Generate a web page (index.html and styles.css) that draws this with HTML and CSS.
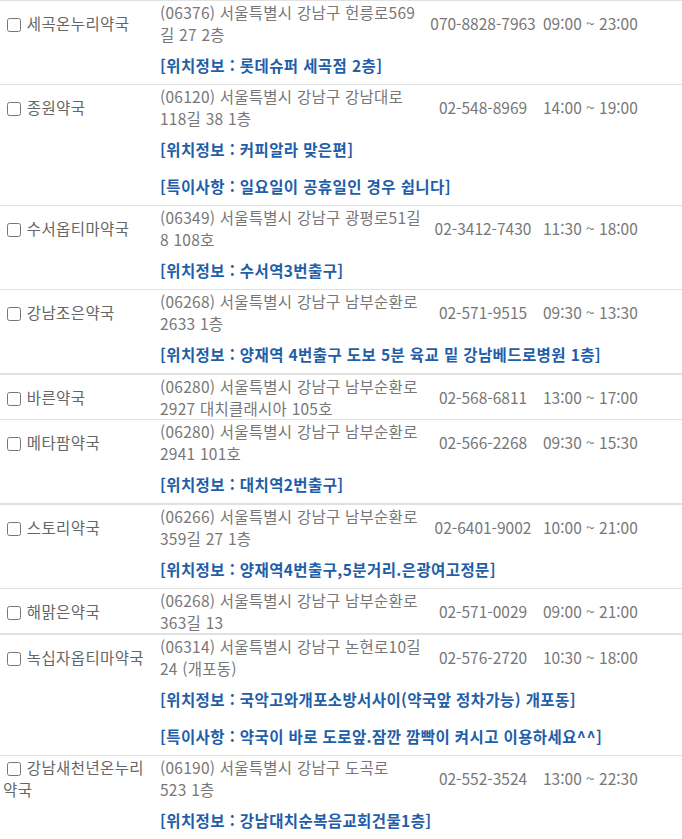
FILE: index.html
```html
<!DOCTYPE html>
<html lang="ko">
<head>
  <meta charset="UTF-8" />
  <meta name="viewport" content="width=device-width, initial-scale=1.0"/>
  <title>강남구 약국 목록</title>
  <link rel="stylesheet" href="styles.css">
</head>
<body>

  <table class="list">
    <colgroup>
      <col class="c-name">
      <col class="c-addr">
      <col class="c-tel">
      <col class="c-time">
    </colgroup>

    <tbody class="item">
      <tr class="main">
        <td class="name"><input type="checkbox"> 세곡온누리약국</td>
        <td class="addr">(06376) 서울특별시 강남구 헌릉로569<br>길 27 2층</td>
        <td class="tel">070-8828-7963</td>
        <td class="time">09:00 ~ 23:00</td>
      </tr>
      <tr class="info">
        <td></td>
        <td colspan="3"><div class="note">[위치정보 : 롯데슈퍼 세곡점 2층]</div></td>
      </tr>
    </tbody>

    <tbody class="item">
      <tr class="main">
        <td class="name"><input type="checkbox"> 종원약국</td>
        <td class="addr">(06120) 서울특별시 강남구 강남대로<br>118길 38 1층</td>
        <td class="tel">02-548-8969</td>
        <td class="time">14:00 ~ 19:00</td>
      </tr>
      <tr class="info">
        <td></td>
        <td colspan="3">
          <div class="note">[위치정보 : 커피알라 맞은편]</div>
          <div class="note">[특이사항 : 일요일이 공휴일인 경우 쉽니다]</div>
        </td>
      </tr>
    </tbody>

    <tbody class="item">
      <tr class="main">
        <td class="name"><input type="checkbox"> 수서옵티마약국</td>
        <td class="addr">(06349) 서울특별시 강남구 광평로51길<br>8 108호</td>
        <td class="tel">02-3412-7430</td>
        <td class="time">11:30 ~ 18:00</td>
      </tr>
      <tr class="info">
        <td></td>
        <td colspan="3"><div class="note">[위치정보 : 수서역3번출구]</div></td>
      </tr>
    </tbody>

    <tbody class="item">
      <tr class="main">
        <td class="name"><input type="checkbox"> 강남조은약국</td>
        <td class="addr">(06268) 서울특별시 강남구 남부순환로<br>2633 1층</td>
        <td class="tel">02-571-9515</td>
        <td class="time">09:30 ~ 13:30</td>
      </tr>
      <tr class="info">
        <td></td>
        <td colspan="3"><div class="note">[위치정보 : 양재역 4번출구 도보 5분 육교 밑 강남베드로병원 1층]</div></td>
      </tr>
    </tbody>

    <tbody class="item thick">
      <tr class="main">
        <td class="name"><input type="checkbox"> 바른약국</td>
        <td class="addr">(06280) 서울특별시 강남구 남부순환로<br>2927 대치클래시아 105호</td>
        <td class="tel">02-568-6811</td>
        <td class="time">13:00 ~ 17:00</td>
      </tr>
    </tbody>

    <tbody class="item">
      <tr class="main">
        <td class="name"><input type="checkbox"> 메타팜약국</td>
        <td class="addr">(06280) 서울특별시 강남구 남부순환로<br>2941 101호</td>
        <td class="tel">02-566-2268</td>
        <td class="time">09:30 ~ 15:30</td>
      </tr>
      <tr class="info">
        <td></td>
        <td colspan="3"><div class="note">[위치정보 : 대치역2번출구]</div></td>
      </tr>
    </tbody>

    <tbody class="item thick">
      <tr class="main">
        <td class="name"><input type="checkbox"> 스토리약국</td>
        <td class="addr">(06266) 서울특별시 강남구 남부순환로<br>359길 27 1층</td>
        <td class="tel">02-6401-9002</td>
        <td class="time">10:00 ~ 21:00</td>
      </tr>
      <tr class="info">
        <td></td>
        <td colspan="3"><div class="note">[위치정보 : 양재역4번출구,5분거리.은광여고정문]</div></td>
      </tr>
    </tbody>

    <tbody class="item">
      <tr class="main">
        <td class="name"><input type="checkbox"> 해맑은약국</td>
        <td class="addr">(06268) 서울특별시 강남구 남부순환로<br>363길 13</td>
        <td class="tel">02-571-0029</td>
        <td class="time">09:00 ~ 21:00</td>
      </tr>
    </tbody>

    <tbody class="item thick">
      <tr class="main">
        <td class="name"><input type="checkbox"> 녹십자옵티마약국</td>
        <td class="addr">(06314) 서울특별시 강남구 논현로10길<br>24 (개포동)</td>
        <td class="tel">02-576-2720</td>
        <td class="time">10:30 ~ 18:00</td>
      </tr>
      <tr class="info">
        <td></td>
        <td colspan="3">
          <div class="note">[위치정보 : 국악고와개포소방서사이(약국앞 정차가능) 개포동]</div>
          <div class="note">[특이사항 : 약국이 바로 도로앞.잠깐 깜빡이 켜시고 이용하세요^^]</div>
        </td>
      </tr>
    </tbody>

    <tbody class="item">
      <tr class="main">
        <td class="name"><input type="checkbox"> 강남새천년온누리약국</td>
        <td class="addr">(06190) 서울특별시 강남구 도곡로<br>523 1층</td>
        <td class="tel">02-552-3524</td>
        <td class="time">13:00 ~ 22:30</td>
      </tr>
      <tr class="info">
        <td></td>
        <td colspan="3"><div class="note">[위치정보 : 강남대치순복음교회건물1층]</div></td>
      </tr>
    </tbody>
  </table>

</body>
</html>
```

FILE: styles.css
```css
* {
  box-sizing: border-box;
}

body {
  margin: 0;
  background: #fff;
  font-family: "Noto Sans CJK KR", "Noto Sans", sans-serif;
  font-size: 15.5px;
  line-height: 22px;
  color: #777;
}

.list {
  width: 100%;
  border-collapse: collapse;
  table-layout: fixed;
}

.c-name { width: 155px; }
.c-addr { width: 268px; }
.c-tel  { width: 120px; }
.c-time { width: auto; }

.list td {
  padding: 0;
  vertical-align: middle;
}

.item {
  border-top: 1px solid #e1e1e1;
}

.item.thick {
  border-top: 2px solid #e1e1e1;
}

.name {
  padding: 0 8px 0 3px !important;
  color: #666;
  letter-spacing: 0.4px;
}

.name input {
  margin: 0 1px 0 4px;
  width: 14px;
  height: 14px;
  vertical-align: -2px;
}

.addr {
  padding: 0 5px !important;
  white-space: nowrap;
  letter-spacing: 0.25px;
}

.tel {
  text-align: center;
  white-space: nowrap;
}

.time {
  white-space: nowrap;
}

.info td {
  padding: 9px 5px 8px !important;
}

.note {
  color: #1f5ea8;
  font-weight: bold;
  white-space: nowrap;
  letter-spacing: 0.4px;
}

.note + .note {
  margin-top: 15px;
}
```
